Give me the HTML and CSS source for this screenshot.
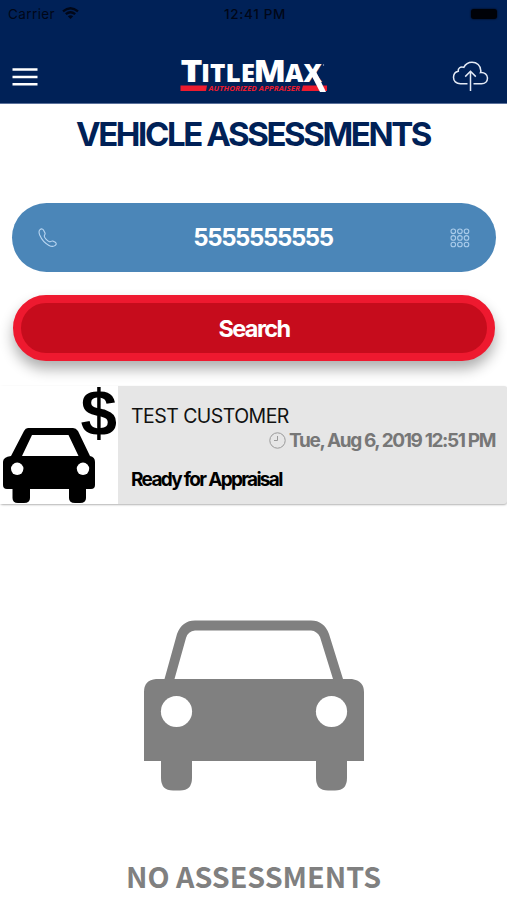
FILE: index.html
```html
<!DOCTYPE html>
<html lang="en">
<head>
<meta charset="utf-8">
<title>Vehicle Assessments</title>
<link rel="stylesheet" href="styles.css">
</head>
<body>
<header class="top">
  <div class="status">
    <div class="carrier"><span>Carrier</span>
      <svg width="17" height="13" viewBox="0 0 17 13"><g fill="none" stroke="#000718" stroke-width="2.3"><path d="M1 4.4Q8.500-2 16 4.400M3.800 7.200Q8.500 3.200 13.200 7.200"/></g><path d="M5.800 9.300Q8.500 7.200 11.200 9.300L8.500 12z" fill="#000718"/></svg>
    </div>
    <span class="time">12:41 PM</span>
    <span class="battery"></span>
  </div>
  <nav class="nav">
    <svg width="26" height="20" viewBox="0 0 26 20"><path d="M0.500 2.500H25.500M0.500 9.900H25.500M0.500 17.300H25.500" stroke="#fff" stroke-width="2.500"/></svg>
    <svg class="logo" width="150" height="36" viewBox="0 0 150 36">
      <g class="logo-name">
        <text x="0.500" y="25" font-size="30.500" textLength="22" lengthAdjust="spacingAndGlyphs">T</text>
        <text x="21" y="25" font-size="24.500" textLength="54" lengthAdjust="spacingAndGlyphs">ITLE</text>
        <text x="73.500" y="25" font-size="30.500" textLength="32.500" lengthAdjust="spacingAndGlyphs">M</text>
        <text x="105" y="25" font-size="24.500" textLength="37" lengthAdjust="spacingAndGlyphs">AX</text>
      </g>
      <path d="M0.500 28.600H27L26 34H0.500zM123 28.600H147V34H121.500z" fill="#ed1b2e"/>
      <path d="M130 15.500L135 12.500L146 35H140z" fill="#fff"/>
      <text class="logo-tag" x="28.500" y="34" font-size="7.500" textLength="91.500" lengthAdjust="spacingAndGlyphs">AUTHORIZED APPRAISER</text>
      <circle cx="143.500" cy="8" r=".7" fill="#9aabc8"/>
    </svg>
    <svg width="37" height="32" viewBox="0 0 37 32"><g fill="none" stroke="#e3eaf5" stroke-width="1.500"><path d="M15.500 22.800H8.500C4 22.800 1.500 19.700 1.500 16.500C1.500 13.200 3.500 10.800 6.300 10.200C5.700 7.500 8.500 5 11.800 6.400C13.500 3 16.500 1.300 20 1.300C25 1.300 28.500 4.600 28.700 9.200C28.900 10.200 28.700 11 28.500 11.500C32.500 11 35.500 13.700 35.500 17C35.500 20.500 33 22.800 29.500 22.800H21.500M18.500 30V10.500M13.200 15.600L18.500 10.300L23.800 15.600"/></g></svg>
  </nav>
</header>
<main>
  <h1>VEHICLE ASSESSMENTS</h1>
  <div class="phone">
    <svg width="20" height="20" viewBox="0 0 20 20"><path d="M2 1.600C3.500.4 4.800.8 5.600 2.200L7 5C7.500 6.200 6.400 7 6.200 8C6.500 10 9.500 13 11.500 13.800C12.800 14 13.400 12.600 14.800 13L17.300 14.300C18.600 15.200 18.400 16.600 17.300 17.400C15.500 18.800 13.300 18.700 11 17.400C6.500 15 3.500 11.200 1.700 7C.8 4.700.8 2.700 2 1.600Z" fill="none" stroke="#b9d6f2" stroke-width="1.100"/></svg>
    <span>5555555555</span>
    <svg width="20" height="20" viewBox="0 0 20 20"><g fill="none" stroke="#a9cbea" stroke-width="1.100"><circle cx="3.300" cy="3.300" r="2.300"/><circle cx="9.900" cy="3.300" r="2.300"/><circle cx="16.500" cy="3.300" r="2.300"/><circle cx="3.300" cy="9.900" r="2.300"/><circle cx="9.900" cy="9.900" r="2.300"/><circle cx="16.500" cy="9.900" r="2.300"/><circle cx="3.300" cy="16.500" r="2.300"/><circle cx="9.900" cy="16.500" r="2.300"/><circle cx="16.500" cy="16.500" r="2.300"/></g></svg>
  </div>
  <button class="search">Search</button>
  <article class="card">
    <svg class="thumb" width="118" height="118" viewBox="0 0 118 118">
      <path fill-rule="evenodd" d="M28 42H73Q76 42 78 45L90 70Q95 71 95 76V99Q95 103 91 103H86V112Q86 117 80 117H75Q69 117 69 112V103H30V112Q30 117 24 117H18Q12.500 117 12.500 112V103H7Q3 103 3 99V76Q3 71 11 70L24 45Q25.500 42 28 42ZM32 49L22 70H78.500L68.500 49Z"/>
      <circle cx="17.200" cy="82.800" r="6.200" fill="#fff"/><circle cx="83" cy="82.800" r="6.200" fill="#fff"/>
      <text class="dollar" x="80.500" y="48.500" font-size="64" textLength="36.500" lengthAdjust="spacingAndGlyphs">$</text>
    </svg>
    <div class="info">
      <div class="name">TEST CUSTOMER</div>
      <div class="when">
        <svg width="17" height="17" viewBox="0 0 17 17"><g fill="none" stroke="#999" stroke-width="1"><circle cx="8.500" cy="8.500" r="7.700"/><path d="M8.500 4V8.500H5"/></g></svg>
        <span>Tue, Aug 6, 2019 12:51 PM</span>
      </div>
      <div class="state">Ready for Appraisal</div>
    </div>
  </article>
  <section class="empty">
    <svg width="222" height="172" viewBox="0 0 222 172">
      <path fill="#808080" fill-rule="evenodd" d="M52 0.500H168Q181 0.500 186 14L200 59H209Q221 61 221 72V141H204V158Q204 170.500 192 170.500H185Q173 170.500 173 158V141H49V158Q49 170.500 37 170.500H30Q18 170.500 18 158V141H1V72Q1 60 13 59H21.500L34 14Q39 0.500 52 0.500ZM52 10.500Q45 11 43 18L31.500 59H190L177 17Q174 11 168 10.500Z"/>
      <circle cx="33.500" cy="91.500" r="15.600" fill="#fff"/><circle cx="188.500" cy="91.500" r="15.600" fill="#fff"/>
    </svg>
    <p>NO ASSESSMENTS</p>
  </section>
</main>
</body>
</html>
```
FILE: styles.css
```css
* { box-sizing: border-box; }
body { margin: 0; width: 507px; height: 900px; overflow: hidden; background: #fff; font-family: Inter, "Liberation Sans", sans-serif; }
svg { display: block; flex: none; }
.top { height: 104px; background: #002157; border-bottom: 1px solid #5a709a; }
.status { height: 28px; padding: 0 10px 0 8px; display: grid; grid-template-columns: 1fr auto 1fr; align-items: center; color: #000718; font-size: 13.5px; letter-spacing: .4px; }
.carrier { display: flex; align-items: center; gap: 7px; }
.carrier svg { margin-top: -2px; }
.time { font-weight: 500; margin-left: 5px; letter-spacing: .65px; }
.battery { justify-self: end; width: 26px; height: 10px; border-radius: 3px; background: #000208; box-shadow: 0 0 2px #000208; }
.nav { height: 74px; padding: 0 18px 0 12px; display: flex; justify-content: space-between; align-items: flex-start; }
.nav > svg:first-child { margin-top: 39px; }
.nav > svg:last-child { margin-top: 33px; }
.nav .logo { margin: 29px 0 0 20px; overflow: visible; }
.logo-name { font-family: "Open Sans", sans-serif; font-weight: 800; fill: #fff; }
.logo-tag { font-family: "Open Sans", sans-serif; font-weight: 700; font-style: italic; fill: #ed1b2e; }
h1 { margin: 10px 0 0; height: 40px; line-height: 40px; text-align: center; font-size: 33px; font-weight: 700; letter-spacing: -2.4px; text-indent: -1px; color: #002157; white-space: nowrap; }
.phone { margin: 49px 11px 0 12px; height: 69px; padding: 0 26px; border-radius: 35px; background: #4b86b8; color: #fff; display: flex; justify-content: space-between; align-items: center; font-size: 24px; font-weight: 700; letter-spacing: -1.4px; }
.phone span { margin-left: 18px; }
.search { display: block; margin: 23px 12px 0 13px; width: 482px; height: 66px; padding: 0; border: 8px solid #ee192f; border-radius: 33px; background: #c60c1c; color: #fff; font: 700 23.5px Inter, sans-serif; letter-spacing: -1.6px; box-shadow: 0 8px 14px rgba(0, 0, 0, .32); }
.card { margin-top: 25px; height: 118px; display: flex; background: #e6e6e6; border-radius: 3px; box-shadow: 0 1px 2px rgba(0, 0, 0, .3); }
.thumb { background: #fff; overflow: visible; }
.dollar { font-family: "Liberation Sans", sans-serif; font-weight: 700; }
.info { flex: 1; padding: 18px 12px 0 13px; white-space: nowrap; }
.name { height: 24px; line-height: 24px; font-size: 19.5px; letter-spacing: -.55px; color: #111; }
.when { height: 25px; display: flex; justify-content: flex-end; align-items: center; gap: 3px; color: #777; font-size: 19px; font-weight: 700; letter-spacing: -1.38px; }
.state { margin-top: 14px; height: 25px; line-height: 25px; font-size: 19px; font-weight: 700; letter-spacing: -1.68px; color: #000; }
.empty { display: flex; flex-direction: column; align-items: center; margin-top: 116px; }
.empty p { margin: 64px 0 0; font: 700 28.7px/40px "Noto Sans CJK SC", sans-serif; color: #808080; }
```
